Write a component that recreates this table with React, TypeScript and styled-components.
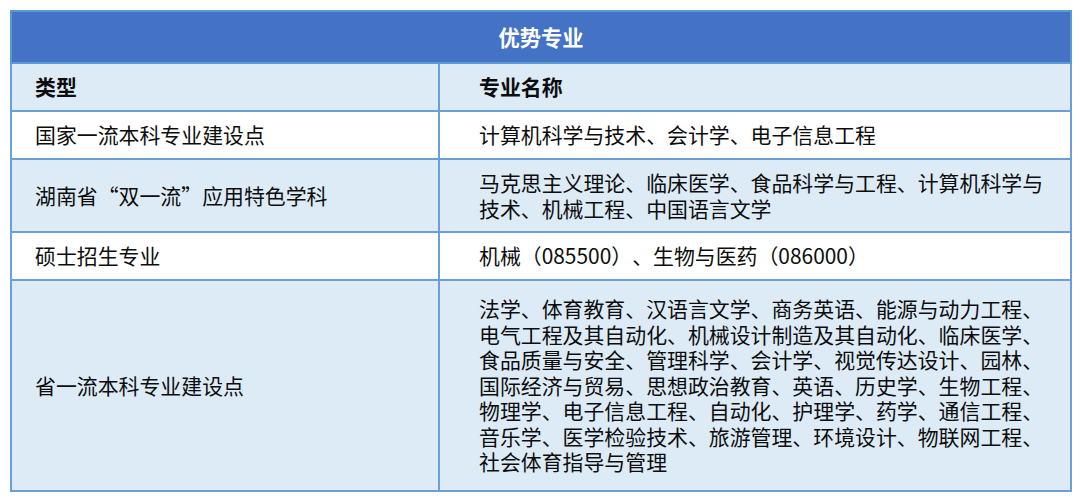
import React from "react";
import styled, { createGlobalStyle } from "styled-components";

const Global = createGlobalStyle`
  html, body { margin: 0; padding: 0; background: #ffffff; }
  body { font-family: "Noto Sans CJK SC", "Noto Sans", sans-serif; }
`;

const Page = styled.div`
  padding: 10px 10px 0 10px;
  width: 1080px;
  box-sizing: border-box;
`;

const Table = styled.table`
  width: 1060px;
  border-collapse: collapse;
  table-layout: fixed;
  border: 2px solid #5b9bd5;
  font-family: "Noto Sans CJK SC", "Noto Sans", sans-serif;
  font-size: 20.9px;
  line-height: 25.5px;
  color: #0d0d0d;
  text-spacing-trim: space-all;
`;

const Col = styled.col<{ $w: number }>`
  width: ${(p) => p.$w}px;
`;

const TitleCell = styled.th`
  height: 50px;
  padding: 0;
  background: #4472c4;
  color: #ffffff;
  font-weight: 700;
  font-size: 21.3px;
  text-align: center;
  vertical-align: middle;
  border-bottom: 2px solid #5b9bd5;
`;

const Row = styled.tr<{ $shade: boolean; $h: number }>`
  height: ${(p) => p.$h}px;
  background: ${(p) => (p.$shade ? "#ddebf7" : "#ffffff")};
`;

const LeftCell = styled.td<{ $bold?: boolean }>`
  padding: 0 10px 0 23px;
  border: 2px solid #6a9fd8;
  vertical-align: middle;
  font-weight: ${(p) => (p.$bold ? 700 : 400)};
`;

const RightCell = styled.td<{ $bold?: boolean }>`
  padding: 0 18px 0 39px;
  border: 2px solid #6a9fd8;
  vertical-align: middle;
  font-weight: ${(p) => (p.$bold ? 700 : 400)};
`;

const rows: { type: string; names: string; h: number }[] = [
  { type: "国家一流本科专业建设点", names: "计算机科学与技术、会计学、电子信息工程", h: 48 },
  {
    type: "湖南省“双一流”应用特色学科",
    names: "马克思主义理论、临床医学、食品科学与工程、计算机科学与技术、机械工程、中国语言文学",
    h: 73,
  },
  { type: "硕士招生专业", names: "机械（085500）、生物与医药（086000）", h: 48 },
  {
    type: "省一流本科专业建设点",
    names:
      "法学、体育教育、汉语言文学、商务英语、能源与动力工程、电气工程及其自动化、机械设计制造及其自动化、临床医学、食品质量与安全、管理科学、会计学、视觉传达设计、园林、国际经济与贸易、思想政治教育、英语、历史学、生物工程、物理学、电子信息工程、自动化、护理学、药学、通信工程、音乐学、医学检验技术、旅游管理、环境设计、物联网工程、社会体育指导与管理",
    h: 211,
  },
];

export default function App() {
  return (
    <>
      <Global />
      <Page>
        <Table>
          <colgroup>
            <Col $w={428} />
            <Col $w={632} />
          </colgroup>
          <thead>
            <tr>
              <TitleCell colSpan={2}>优势专业</TitleCell>
            </tr>
          </thead>
          <tbody>
            <Row $shade $h={48}>
              <LeftCell $bold>类型</LeftCell>
              <RightCell $bold>专业名称</RightCell>
            </Row>
            {rows.map((r, i) => (
              <Row key={r.type} $shade={i % 2 === 1} $h={r.h}>
                <LeftCell>{r.type}</LeftCell>
                <RightCell>{r.names}</RightCell>
              </Row>
            ))}
          </tbody>
        </Table>
      </Page>
    </>
  );
}
